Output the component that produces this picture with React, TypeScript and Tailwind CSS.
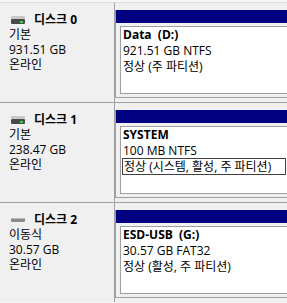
import React from "react";

type Disk = {
  name: string;
  kind: string;
  size: string;
  removable?: boolean;
  label: string;
  fs: string;
  status: string;
  focused?: boolean;
  first?: boolean;
};

const disks: Disk[] = [
  { name: "디스크 0", kind: "기본", size: "931.51 GB", label: "Data  (D:)", fs: "921.51 GB NTFS", status: "정상 (주 파티션)", first: true },
  { name: "디스크 1", kind: "기본", size: "238.47 GB", label: "SYSTEM", fs: "100 MB NTFS", status: "정상 (시스템, 활성, 주 파티션)", focused: true },
  { name: "디스크 2", kind: "이동식", size: "30.57 GB", removable: true, label: "ESD-USB  (G:)", fs: "30.57 GB FAT32", status: "정상 (활성, 주 파티션)" },
];

function DiskIcon({ removable }: { removable?: boolean }) {
  if (removable) {
    return (
      <svg width="14" height="8" viewBox="0 0 14 8" className="block">
        <rect x="0" y="2" width="14" height="4" rx="1" fill="#8a8a8a" />
        <rect x="0" y="2" width="14" height="1" fill="#b8b8b8" />
      </svg>
    );
  }
  return (
    <svg width="14" height="8" viewBox="0 0 14 8" className="block">
      <rect x="0" y="0" width="14" height="3" rx="1" fill="#c8c8c8" />
      <rect x="0" y="3" width="14" height="5" rx="1" fill="#4a4a4a" />
      <rect x="9" y="5" width="3" height="2" fill="#3fd04a" />
    </svg>
  );
}

function Row({ d }: { d: Disk }) {
  return (
    <div className={d.first ? "flex h-[100px] border-t border-[#dcdcdc]" : "flex h-[100px] border-t border-[#a0a0a0]"}>
      <div className="w-[115px] shrink-0 bg-[#f0f0f0] border-r border-[#a0a0a0] pl-[9px] pt-[9px] leading-[15px]">
        <div className="flex items-center h-[15px]">
          <div className="ml-[2px] w-[14px]">
            <DiskIcon removable={d.removable} />
          </div>
          <span className="ml-[9px] font-bold">{d.name}</span>
        </div>
        <div>{d.kind}</div>
        <div>{d.size}</div>
        <div>온라인</div>
      </div>
      <div className="flex-1 min-w-0 bg-[#f0f0f0] pt-[7px]">
        <div className="border-l border-b border-[#a0a0a0] pb-[3px]">
          <div className="h-[13px] bg-[#000080]" />
          <div className="pt-[3px] pl-[4px]">
            <div className="h-[68px] bg-white border border-r-0 border-[#a0a0a0] pl-[2px] leading-[16px] whitespace-pre">
              <div className="font-bold">{d.label}</div>
              <div>{d.fs}</div>
              {d.focused ? (
                <div className="-mt-[1px] -ml-[1px] mr-[1px] h-[17px] border border-[#404040] pl-[1px] leading-[15px]">
                  {d.status}
                </div>
              ) : (
                <div>{d.status}</div>
              )}
            </div>
          </div>
        </div>
      </div>
    </div>
  );
}

export default function App() {
  return (
    <div
      className="w-[287px] h-[303px] overflow-hidden bg-[#f5f5f5] pt-[2px] text-[12px] text-black"
      style={{ fontFamily: '"Open Sans", "Noto Sans CJK KR", sans-serif' }}
    >
      {disks.map((d) => (
        <Row key={d.name} d={d} />
      ))}
    </div>
  );
}
